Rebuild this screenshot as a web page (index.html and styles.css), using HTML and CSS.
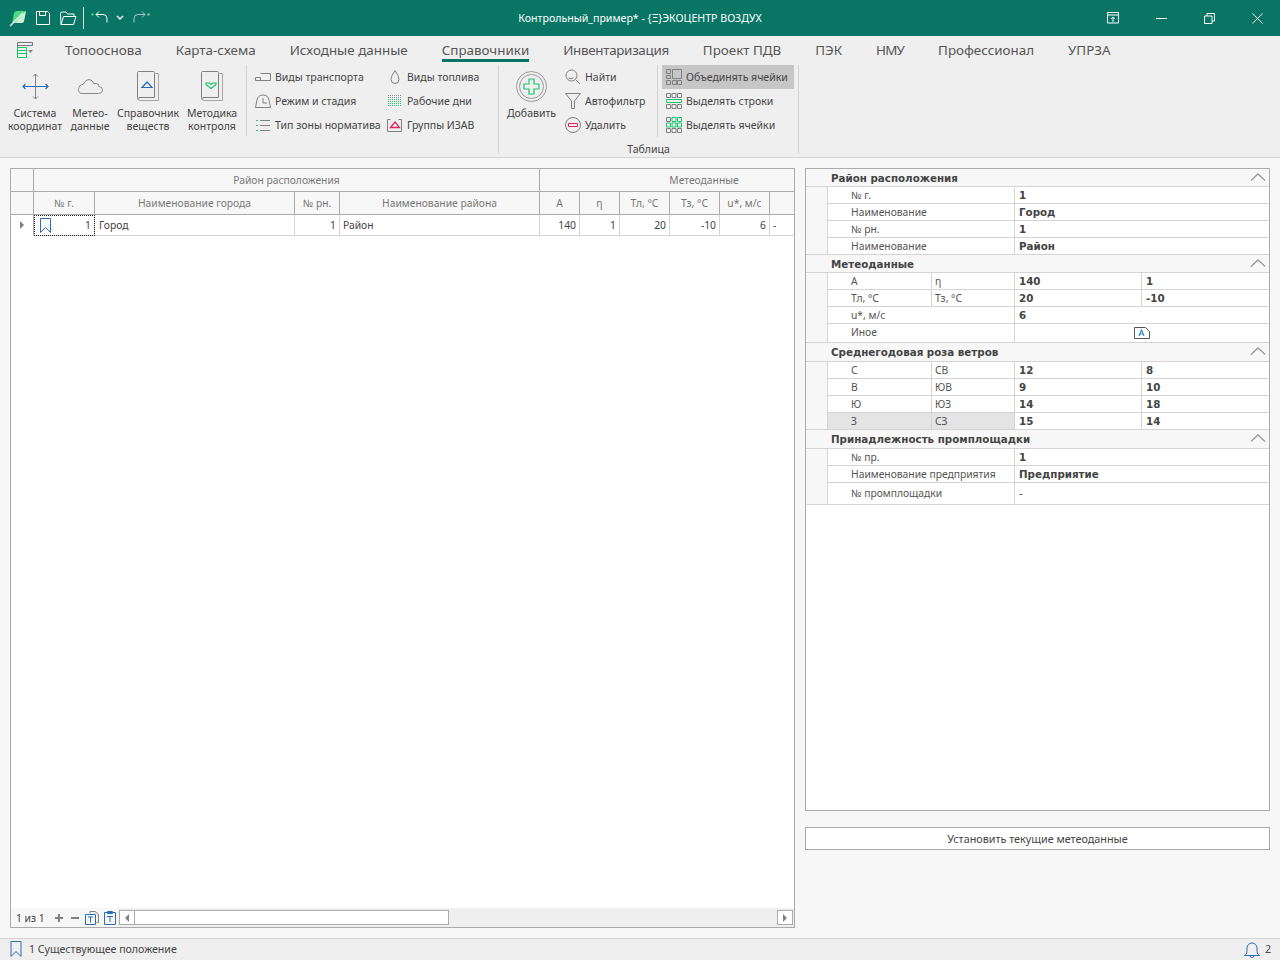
FILE: index.html
```html
<!DOCTYPE html>
<html lang="ru">
<head>
    <meta charset="UTF-8">
    <title>Контрольный_пример* - {Ξ}ЭКОЦЕНТР ВОЗДУХ</title>
    <link rel="stylesheet" href="styles.css">
</head>
<body>

    <!-- Title bar -->
    <header class="titlebar">
        <div class="qat">
            <svg width="18" height="18" viewBox="0 0 18 18" fill="none"><path d="M3 15 5 4Q6 2 8 2h9l-2 10q-.500 2-2.500 2H5z" fill="#4fd884"/><path d="M17 2l-2 10q-.500 2-2.500 2H6z" fill="#c9f2d6"/><path d="M1 17 14 4" stroke="#fff" stroke-width="1.200"/></svg>
            <svg class="qat-save" width="16" height="16" viewBox="0 0 16 16" fill="none" stroke="#fff"><path d="M1.500 1.500h11l2 2v11h-13z"/><path d="M4.500 1.500v4h6v-4"/></svg>
            <svg class="qat-open" width="18" height="16" viewBox="0 0 18 16" fill="none" stroke="#fff"><path d="M2 14.500 1.500 3.500q0-1.500 1.500-1.500h4l1.500 2h6.500v2"/><path d="M2 14.500 4.500 6.500h12.500l-2.500 8z"/></svg>
            <span class="qat-sep"></span>
            <svg width="18" height="14" viewBox="0 0 18 14" fill="none"><circle cx="1.500" cy="3.500" r="1.300" fill="#35d07f"/><path d="M5 3.500h7q4 0 4 4v4M5 3.500l3-3M5 3.500l3 3" stroke="#fff"/></svg>
            <svg class="qat-drop" width="8" height="6" viewBox="0 0 8 6" fill="none" stroke="#fff" stroke-width="1.400"><path d="M1 1l3 3 3-3"/></svg>
            <svg width="18" height="14" viewBox="0 0 18 14" fill="none"><circle cx="16.500" cy="3.500" r="1.300" fill="#8fb8ae"/><path d="M13 3.500h-7q-4 0-4 4v4M13 3.500l-3-3M13 3.500l-3 3" stroke="#a9cbc3"/></svg>
        </div>
        <div class="app-title">Контрольный_пример* - {Ξ}ЭКОЦЕНТР ВОЗДУХ</div>
        <div class="win-buttons">
            <svg width="12" height="12" viewBox="0 0 12 12" fill="none" stroke="#fff"><path d="M.5.500h11v10.500H.5zM.5 3h11"/><path d="M6 10V5M4 7l2-2 2 2"/></svg>
            <svg width="11" height="12" viewBox="0 0 11 12" stroke="#fff"><path d="M0 6.500h11"/></svg>
            <svg width="11" height="11" viewBox="0 0 11 11" fill="none" stroke="#fff"><path d="M.5 3h7.500v7.500H.5zM3 3V.5h7.500V8H8"/></svg>
            <svg width="11" height="11" viewBox="0 0 11 11" fill="none" stroke="#fff"><path d="M.5.500l10 10M10.500.500l-10 10"/></svg>
        </div>
    </header>

    <!-- Menu tabs -->
    <nav class="menu">
        <svg class="menu-icon" width="18" height="18" viewBox="0 0 18 18" fill="none"><path d="M1.500 6.500h9v10h-9zM1.500 9.500h9M1.500 12.500h9" stroke="#19c76a"/><path d="M1.500 1.500h15M1.500 4.500h15M16.500 1.500v3M1.500 1.500v5" stroke="#777"/><path d="M12 9h5l-2.500 3z" fill="#888"/></svg>
        <a class="tab">Топооснова</a>
        <a class="tab">Карта-схема</a>
        <a class="tab">Исходные данные</a>
        <a class="tab active">Справочники</a>
        <a class="tab tight">Инвентаризация</a>
        <a class="tab">Проект ПДВ</a>
        <a class="tab">ПЭК</a>
        <a class="tab tighter">НМУ</a>
        <a class="tab">Профессионал</a>
        <a class="tab">УПРЗА</a>
    </nav>

    <!-- Ribbon -->
    <section class="ribbon">
        <div class="rb-group rb-refs">
            <div class="big-btn w60">
                <span class="big-icon"><svg width="27" height="27" viewBox="0 0 27 27" fill="none"><path d="M13.500 1v25M11 3.500 13.500 1 16 3.500M11 23.500 13.500 26 16 23.500" stroke="#808080"/><path d="M1 13.500h25M3.500 11 1 13.500 3.500 16M23.500 11 26 13.500 23.500 16" stroke="#2a6db5" stroke-width="1.200"/></svg></span>
                <span>Система<br>координат</span>
            </div>
            <div class="big-btn w50">
                <span class="big-icon"><svg width="25" height="15" viewBox="0 0 25 15" fill="none" stroke="#8a8a8a"><path d="M5 14.500h15.500q4 0 4-3.500 0-3-3.500-3.500 0-3-3-3-1 0-2 .500Q14.500.5 11 .5T5.500 5Q.5 6 .5 10.500t4.500 4z"/></svg></span>
                <span>Метео-<br>данные</span>
            </div>
            <div class="big-btn w66">
                <span class="big-icon"><svg width="22" height="30" viewBox="0 0 22 30" fill="none"><path d="M.5 26V1.500q0-1 1-1h15q1 0 1 1v25H3q-2.500 0-2.500 2.500" stroke="#808080"/><path d="M17.500 2.500h4v27H3q-2.500 0-2.500-3.500" stroke="#a5a5a5"/><path d="M5 16.500 10 11l5 5.500z" stroke="#2a6db5" stroke-width="1.200"/></svg></span>
                <span>Справочник<br>веществ</span>
            </div>
            <div class="big-btn w62">
                <span class="big-icon"><svg width="22" height="30" viewBox="0 0 22 30" fill="none"><path d="M.5 26V1.500q0-1 1-1h15q1 0 1 1v25H3q-2.500 0-2.500 2.500" stroke="#808080"/><path d="M17.500 2.500h4v27H3q-2.500 0-2.500-3.500" stroke="#a5a5a5"/><path d="M5 12h3.500l1.500 1.500 1.500-1.500H15v1.500L10 17.500 5 13.500z" stroke="#19c76a" stroke-width="1.200"/></svg></span>
                <span>Методика<br>контроля</span>
            </div>
        </div>
        <div class="rb-group rb-lists">
            <div class="small-col col-a">
                <div class="small-btn"><svg width="16" height="16" viewBox="0 0 16 16" fill="none" stroke="#808080"><path d="M5.500 4.500h10v7H4.500M.5 8.500h5v3H.5zM6 11.500h2M12 11.500h2"/></svg>Виды транспорта</div>
                <div class="small-btn"><svg width="16" height="16" viewBox="0 0 16 16" fill="none" stroke="#808080"><path d="M.5 14.500 2 7q1-5 6-5t6 5l1.500 7.500z"/><path d="M8 5v5h4"/></svg>Режим и стадия</div>
                <div class="small-btn"><svg width="16" height="16" viewBox="0 0 16 16" fill="none"><path d="M5 3.500h10M5 8.500h10M5 13.500h10" stroke="#808080"/><path d="M1 3.500h2M1 8.500h2M1 13.500h2" stroke="#19c76a"/></svg>Тип зоны норматива</div>
            </div>
            <div class="small-col col-b">
                <div class="small-btn"><svg width="16" height="16" viewBox="0 0 16 16" fill="none" stroke="#808080"><path d="M8 1.500C6 5 4 7.500 4 10.500a4 4 0 0 0 8 0C12 7.500 10 5 8 1.500z"/></svg>Виды топлива</div>
                <div class="small-btn"><svg width="16" height="16" viewBox="0 0 16 16" fill="none" stroke-dasharray="1 1"><path d="M1 2.500h14M1 4.500h14" stroke="#8a8a8a"/><path d="M1 6.500h14M1 8.500h14M1 10.500h14M1 12.500h14" stroke="#19c76a"/></svg>Рабочие дни</div>
                <div class="small-btn"><svg width="16" height="16" viewBox="0 0 16 16" fill="none"><path d="M3.500 2.500h-3v12h14v-12h-3" stroke="#808080"/><path d="M3.500 10.500 8 5l4.500 5.500z" stroke="#e0245e" stroke-width="1.300"/></svg>Группы ИЗАВ</div>
            </div>
        </div>
        <div class="rb-group rb-table">
            <div class="rb-tools">
                <div class="big-btn add-btn">
                    <span class="big-icon"><svg width="31" height="31" viewBox="0 0 31 31" fill="none"><circle cx="15.500" cy="15.500" r="15" stroke="#999"/><circle cx="15.500" cy="15.500" r="12" stroke="#999"/><path d="M13 8h5v5h5v5h-5v5h-5v-5H8v-5h5z" stroke="#19c76a" stroke-width="1.200"/></svg></span>
                    <span>Добавить</span>
                </div>
                <div class="small-col col-c">
                    <div class="small-btn"><svg width="16" height="16" viewBox="0 0 16 16" fill="none" stroke="#808080"><circle cx="6.500" cy="6.500" r="5.500"/><path d="M10.500 10.500l4.500 4.500M3.500 9q2 1.500 5 0"/></svg>Найти</div>
                    <div class="small-btn"><svg width="16" height="16" viewBox="0 0 16 16" fill="none" stroke="#808080"><path d="M.5 .5h15L9.500 8v7.500h-3V8z"/></svg>Автофильтр</div>
                    <div class="small-btn"><svg width="16" height="16" viewBox="0 0 16 16" fill="none"><circle cx="8" cy="8" r="7.500" stroke="#808080"/><path d="M3.500 6.500h9v3h-9z" stroke="#e0245e"/></svg>Удалить</div>
                </div>
                <div class="small-col col-d">
                    <div class="small-btn selected"><svg width="16" height="16" viewBox="0 0 16 16" fill="none" stroke="#808080"><path d="M.5.500h4v4h-4zM.5 6.500h4v3h-4zM6.500.500h9v9h-9zM.5 11.500h4v4h-4zM6.500 11.500h4v4h-4zM11.500 11.500h4v4h-4z"/></svg>Объединять ячейки</div>
                    <div class="small-btn"><svg width="16" height="16" viewBox="0 0 16 16" fill="none"><path d="M.5.500h4v4h-4zM6 .5h4v4H6zM11.500.500h4v4h-4zM.5 11.500h4v4h-4zM6 11.500h4v4H6zM11.500 11.500h4v4h-4z" stroke="#808080"/><path d="M.5 6.500h15v3H.5z" stroke="#19c76a"/></svg>Выделять строки</div>
                    <div class="small-btn"><svg width="16" height="16" viewBox="0 0 16 16" fill="none"><path d="M.5.500h4v4h-4zM11.500 11.500h4v4h-4zM.5 11.500h4v4h-4zM6 11.500h4v4H6z" stroke="#808080"/><path d="M6 .5h4v4H6zM11.500.500h4v4h-4zM.5 6h4v4h-4zM6 6h4v4H6zM11.500 6h4v4h-4z" stroke="#19c76a"/></svg>Выделять ячейки</div>
                </div>
            </div>
            <div class="rb-caption">Таблица</div>
        </div>
    </section>

    <!-- Work area -->
    <main class="workspace">
        <div class="grid-panel">
            <div class="grid-table">
                <div class="hd"></div>
                <div class="hd span-4">Район расположения</div>
                <div class="hd span-6 meteo">Метеоданные</div>

                <div class="hd"></div>
                <div class="hd">№ г.</div>
                <div class="hd">Наименование города</div>
                <div class="hd">№ рн.</div>
                <div class="hd">Наименование района</div>
                <div class="hd">А</div>
                <div class="hd">η</div>
                <div class="hd">Тл, °С</div>
                <div class="hd">Тз, °С</div>
                <div class="hd">u*, м/с</div>
                <div class="hd"></div>

                <div class="cell indicator"><span class="arrow-right"></span></div>
                <div class="cell num focused">
                    <svg class="mark" width="11" height="15" viewBox="0 0 11 15" fill="none" stroke="#2a6db5"><path d="M.5.500h10v14L5.500 9.500.5 14.500z"/></svg>
                    1
                </div>
                <div class="cell">Город</div>
                <div class="cell num">1</div>
                <div class="cell">Район</div>
                <div class="cell num">140</div>
                <div class="cell num">1</div>
                <div class="cell num">20</div>
                <div class="cell num">-10</div>
                <div class="cell num">6</div>
                <div class="cell">-</div>
            </div>

            <div class="grid-footer">
                <div class="navigator">
                    <span class="nav-count">1 из 1</span>
                    <svg width="10" height="10" viewBox="0 0 10 10" stroke="#808080" stroke-width="2"><path d="M5 1v8M1 5h8"/></svg>
                    <svg width="10" height="10" viewBox="0 0 10 10" stroke="#808080" stroke-width="2"><path d="M1 5h8"/></svg>
                    <svg class="nav-tight" width="14" height="14" viewBox="0 0 14 14" fill="none"><path d="M5 2.500V.5h5l3.500 3v8h-2" stroke="#808080"/><path d="M.5 3.500h10v10H.5zM3 6h5M5.500 6v5.500" stroke="#2a6db5"/></svg>
                    <svg class="nav-tight" width="12" height="14" viewBox="0 0 12 14" fill="none" stroke="#2a6db5"><path d="M.5 1.500h11v12H.5zM3.500.5h5v2h-5zM3 5.500h6M6 5.500V11"/></svg>
                </div>
                <div class="hscroll">
                    <div class="sb-btn"><span class="arrow-left"></span></div>
                    <div class="sb-thumb"></div>
                    <div class="sb-track"></div>
                    <div class="sb-btn"><span class="arrow-right"></span></div>
                </div>
            </div>
        </div>

        <aside class="side">
            <div class="props">
                <div class="prop-head">Район расположения<svg class="chev" width="16" height="8" viewBox="0 0 16 8" fill="none" stroke="#999" stroke-width="1.300"><path d="M1 7.500l7-6.500 7 6.500"/></svg></div>
                <div class="prop-row"><div class="lbl">№ г.</div><div class="val">1</div></div>
                <div class="prop-row"><div class="lbl">Наименование</div><div class="val">Город</div></div>
                <div class="prop-row"><div class="lbl">№ рн.</div><div class="val">1</div></div>
                <div class="prop-row"><div class="lbl">Наименование</div><div class="val">Район</div></div>

                <div class="prop-head">Метеоданные<svg class="chev" width="16" height="8" viewBox="0 0 16 8" fill="none" stroke="#999" stroke-width="1.300"><path d="M1 7.500l7-6.500 7 6.500"/></svg></div>
                <div class="prop-row"><div class="lbl half">А</div><div class="lbl2">η</div><div class="val half">140</div><div class="val2">1</div></div>
                <div class="prop-row"><div class="lbl half">Тл, °С</div><div class="lbl2">Тз, °С</div><div class="val half">20</div><div class="val2">-10</div></div>
                <div class="prop-row"><div class="lbl">u*, м/с</div><div class="val">6</div></div>
                <div class="prop-row tall">
                    <div class="lbl">Иное</div>
                    <div class="val center"><svg width="16" height="12" viewBox="0 0 16 12" fill="none"><path d="M.5.500h11l4 4v7H.5z" stroke="#555"/><path d="M5 9l2.500-6L10 9M6 7h3" stroke="#2a8ad4" stroke-width="1.200"/></svg></div>
                </div>

                <div class="prop-head tall">Среднегодовая роза ветров<svg class="chev" width="16" height="8" viewBox="0 0 16 8" fill="none" stroke="#999" stroke-width="1.300"><path d="M1 7.500l7-6.500 7 6.500"/></svg></div>
                <div class="prop-row"><div class="lbl half">С</div><div class="lbl2">СВ</div><div class="val half">12</div><div class="val2">8</div></div>
                <div class="prop-row"><div class="lbl half">В</div><div class="lbl2">ЮВ</div><div class="val half">9</div><div class="val2">10</div></div>
                <div class="prop-row"><div class="lbl half">Ю</div><div class="lbl2">ЮЗ</div><div class="val half">14</div><div class="val2">18</div></div>
                <div class="prop-row hover"><div class="lbl half">З</div><div class="lbl2">СЗ</div><div class="val half">15</div><div class="val2">14</div></div>

                <div class="prop-head tall">Принадлежность промплощадки<svg class="chev" width="16" height="8" viewBox="0 0 16 8" fill="none" stroke="#999" stroke-width="1.300"><path d="M1 7.500l7-6.500 7 6.500"/></svg></div>
                <div class="prop-row"><div class="lbl">№ пр.</div><div class="val">1</div></div>
                <div class="prop-row"><div class="lbl">Наименование предприятия</div><div class="val">Предприятие</div></div>
                <div class="prop-row last"><div class="lbl">№ промплощадки</div><div class="val plain">-</div></div>
            </div>
            <button class="set-btn">Установить текущие метеоданные</button>
        </aside>
    </main>

    <!-- Status bar -->
    <footer class="statusbar">
        <svg width="12" height="16" viewBox="0 0 12 16" fill="none" stroke="#2a6db5"><path d="M1 .5h10v15L6 10.500 1 15.500z"/></svg>
        <span class="status-text">1 Существующее положение</span>
        <svg class="bell" width="16" height="16" viewBox="0 0 16 16" fill="none" stroke="#2a6db5"><path d="M.5 13.500q2.500-1 2.500-4V6a5 5 0 0 1 10 0v3.500q0 3 2.500 4zM6 13.500q0 2 2 2t2-2"/></svg>
        <span>2</span>
    </footer>

</body>
</html>
```

FILE: styles.css
```css
* {
    box-sizing: border-box;
}

body {
    margin: 0;
    width: 1280px;
    height: 960px;
    display: flex;
    flex-direction: column;
    overflow: hidden;
    font-family: "Noto Sans", sans-serif;
    font-size: 10.3px;
    color: #444;
    background: #f7f7f7;
}

svg {
    flex: none;
    display: block;
}

/* Title bar */
.titlebar {
    height: 36px;
    flex: none;
    display: grid;
    grid-template-columns: 1fr auto 1fr;
    align-items: center;
    background: #087565;
    color: #fff;
}

.qat {
    display: flex;
    align-items: center;
    padding-left: 9px;
}

.qat-save,
.qat-open {
    margin-left: 8px;
}

.qat-sep {
    width: 1px;
    height: 22px;
    margin: 0 7px 0 6px;
    background: #cfe3de;
}

.qat-drop {
    margin: 0 8px 0 7px;
}

.app-title {
    font-size: 10.6px;
}

.win-buttons {
    display: flex;
    justify-content: flex-end;
    align-items: center;
    gap: 37px;
    padding-right: 17px;
}

/* Menu */
.menu {
    height: 29px;
    flex: none;
    display: flex;
    align-items: flex-start;
    gap: 34px;
    padding: 4px 0 0 16px;
    background: #efefef;
}

.menu-icon {
    margin: 1px -3px 0 0;
}

.tab {
    height: 22px;
    font-size: 13.4px;
    line-height: 21px;
    color: #555;
}

.tab.active {
    border-bottom: 3px solid #087565;
}

.tab.tight {
    letter-spacing: -.3px;
}

.tab.tighter {
    letter-spacing: -.8px;
}

/* Ribbon */
.ribbon {
    height: 93px;
    flex: none;
    display: flex;
    padding-left: 5px;
    font-size: 10.5px;
    background: #efefef;
    border-bottom: 1px solid #d4d4d4;
}

.rb-group {
    display: flex;
    border-right: 1px solid #d2d2d2;
}

.rb-refs {
    width: 242px;
    height: 71px;
}

.rb-lists {
    width: 252px;
    height: 88px;
    padding-left: 5px;
}

.rb-table {
    width: 300px;
    height: 88px;
    flex-direction: column;
}

.rb-tools {
    display: flex;
    height: 72px;
}

.rb-caption {
    text-align: center;
    line-height: 15px;
    margin-top: 5px;
}

.big-btn {
    display: flex;
    flex-direction: column;
    align-items: center;
    height: 70px;
    line-height: 13px;
    text-align: center;
    white-space: nowrap;
}

.big-icon {
    height: 42px;
    display: flex;
    align-items: center;
}

.w60 { width: 60px; }
.w50 { width: 50px; }
.w66 { width: 66px; }
.w62 { width: 62px; }

.add-btn {
    width: 63px;
    padding-left: 2px;
}

.small-col {
    display: flex;
    flex-direction: column;
}

.col-a {
    width: 132px;
}

.col-b {
    width: 110px;
}

.col-c {
    width: 96px;
    border-right: 1px solid #d2d2d2;
}

.col-d {
    width: 140px;
    padding-left: 4px;
}

.small-btn {
    display: flex;
    align-items: center;
    gap: 4px;
    height: 24px;
    padding-left: 3px;
    white-space: nowrap;
}

.col-d .small-btn {
    padding-left: 4px;
}

.small-btn.selected {
    background: #c6c6c6;
    width: 132px;
}

/* Work area */
.workspace {
    flex: 1;
    display: flex;
    gap: 10px;
    padding: 10px;
    background: #f7f7f7;
}

.grid-panel {
    width: 785px;
    display: flex;
    flex-direction: column;
    justify-content: space-between;
    background: #fff;
    border: 1px solid #ababab;
}

.grid-table {
    display: grid;
    grid-template-columns: 23px 61px 200px 45px 200px 40px 40px 50px 50px 50px 24px;
    grid-template-rows: 23px 23px 21px;
}

.hd {
    display: flex;
    align-items: center;
    justify-content: center;
    background: #f7f7f7;
    color: #777;
    border-right: 1px solid #ababab;
    border-bottom: 1px solid #ababab;
}

.hd.meteo,
.hd:nth-child(14) {
    border-right: 0;
}

.hd.meteo {
    padding-left: 74px;
}

.span-4 {
    grid-column: span 4;
}

.span-6 {
    grid-column: span 6;
}

.cell {
    display: flex;
    align-items: center;
    padding: 0 3px 1px;
    border-right: 1px solid #d4d4d4;
    border-bottom: 1px solid #d4d4d4;
    color: #444;
}

.cell.num {
    justify-content: flex-end;
}

.cell:last-child {
    border-right: 0;
}

.cell.indicator {
    justify-content: center;
    padding: 0;
    border-right: 1px solid #ababab;
    border-bottom-color: #fff;
}

.cell.focused {
    justify-content: space-between;
    outline: 1px dotted #222;
    outline-offset: -1px;
}

.cell.focused + .cell {
    padding-left: 4px;
}

.mark {
    margin: 2px 0 0 3px;
}

.arrow-right {
    width: 0;
    height: 0;
    border-left: 4px solid #808080;
    border-top: 4px solid transparent;
    border-bottom: 4px solid transparent;
}

.arrow-left {
    width: 0;
    height: 0;
    border-right: 4px solid #808080;
    border-top: 4px solid transparent;
    border-bottom: 4px solid transparent;
}

.grid-footer {
    display: flex;
    height: 19px;
    align-items: center;
}

.navigator {
    width: 107px;
    height: 19px;
    display: flex;
    align-items: center;
    padding: 1px 0 0 5px;
    gap: 6px;
    background: #f7f7f7;
}

.nav-count {
    width: 32px;
}

.nav-tight {
    margin-left: -1px;
}

.hscroll {
    flex: 1;
    display: flex;
    height: 19px;
    padding: 2px 1px;
    background: #efefef;
}

.sb-btn {
    width: 16px;
    height: 15px;
    display: flex;
    align-items: center;
    justify-content: center;
    background: #fff;
    border: 1px solid #ababab;
}

.sb-thumb {
    width: 314px;
    background: #fff;
    border: 1px solid #ababab;
    border-left: 0;
}

.sb-track {
    flex: 1;
}

/* Properties */
.side {
    width: 465px;
    display: flex;
    flex-direction: column;
    gap: 16px;
}

.props {
    height: 643px;
    background: #fff;
    border: 1px solid #ababab;
}

.prop-head {
    position: relative;
    height: 18px;
    padding-left: 25px;
    line-height: 18px;
    font-family: "DejaVu Sans", sans-serif;
    font-weight: bold;
    background: #f7f7f7;
    border-bottom: 1px solid #d4d4d4;
    color: #444;
}

.prop-head.tall {
    height: 19px;
}

.chev {
    position: absolute;
    right: 3px;
    top: 4px;
}

.prop-row {
    position: relative;
    display: flex;
    height: 17px;
    margin-left: 21px;
    line-height: 16px;
    border-left: 1px solid #d4d4d4;
    border-bottom: 1px solid #d4d4d4;
    box-shadow: -21px 0 0 #f7f7f7;
}

/* the last row of a section closes the left gutter too */
.prop-row:has(+ .prop-head)::before,
.prop-row.last::before {
    content: "";
    position: absolute;
    left: -22px;
    bottom: -1px;
    width: 22px;
    height: 1px;
    background: #d4d4d4;
}

.prop-row.tall {
    height: 19px;
}

.prop-row.last {
    height: 22px;
    line-height: 21px;
}

.lbl {
    width: 187px;
    flex: none;
    padding-left: 23px;
    border-right: 1px solid #d4d4d4;
    color: #555;
    background: #fff;
}

.lbl.half {
    width: 104px;
}

.lbl2 {
    width: 83px;
    flex: none;
    padding-left: 3px;
    border-right: 1px solid #d4d4d4;
    color: #555;
}

.val,
.val2 {
    flex: 1;
    padding-left: 4px;
    font-family: "DejaVu Sans", sans-serif;
    font-weight: bold;
    color: #444;
}

.val.half {
    flex: none;
    width: 127px;
    border-right: 1px solid #d4d4d4;
}

.val.center {
    display: flex;
    align-items: center;
    justify-content: center;
    padding: 0;
}

.val.plain {
    font-weight: normal;
}

.hover .lbl,
.hover .lbl2 {
    background: #e4e4e4;
}

.set-btn {
    height: 23px;
    padding: 0;
    font: inherit;
    font-size: 10.8px;
    color: #444;
    background: #fff;
    border: 1px solid #ababab;
}

/* Status bar */
.statusbar {
    height: 22px;
    flex: none;
    display: flex;
    align-items: center;
    padding: 0 9px 2px 10px;
    font-size: 10.6px;
    background: #efefef;
    border-top: 1px solid #d4d4d4;
}

.status-text {
    margin-left: 7px;
    flex: 1;
}

.bell {
    margin: 2px 5px 0 0;
}
```
